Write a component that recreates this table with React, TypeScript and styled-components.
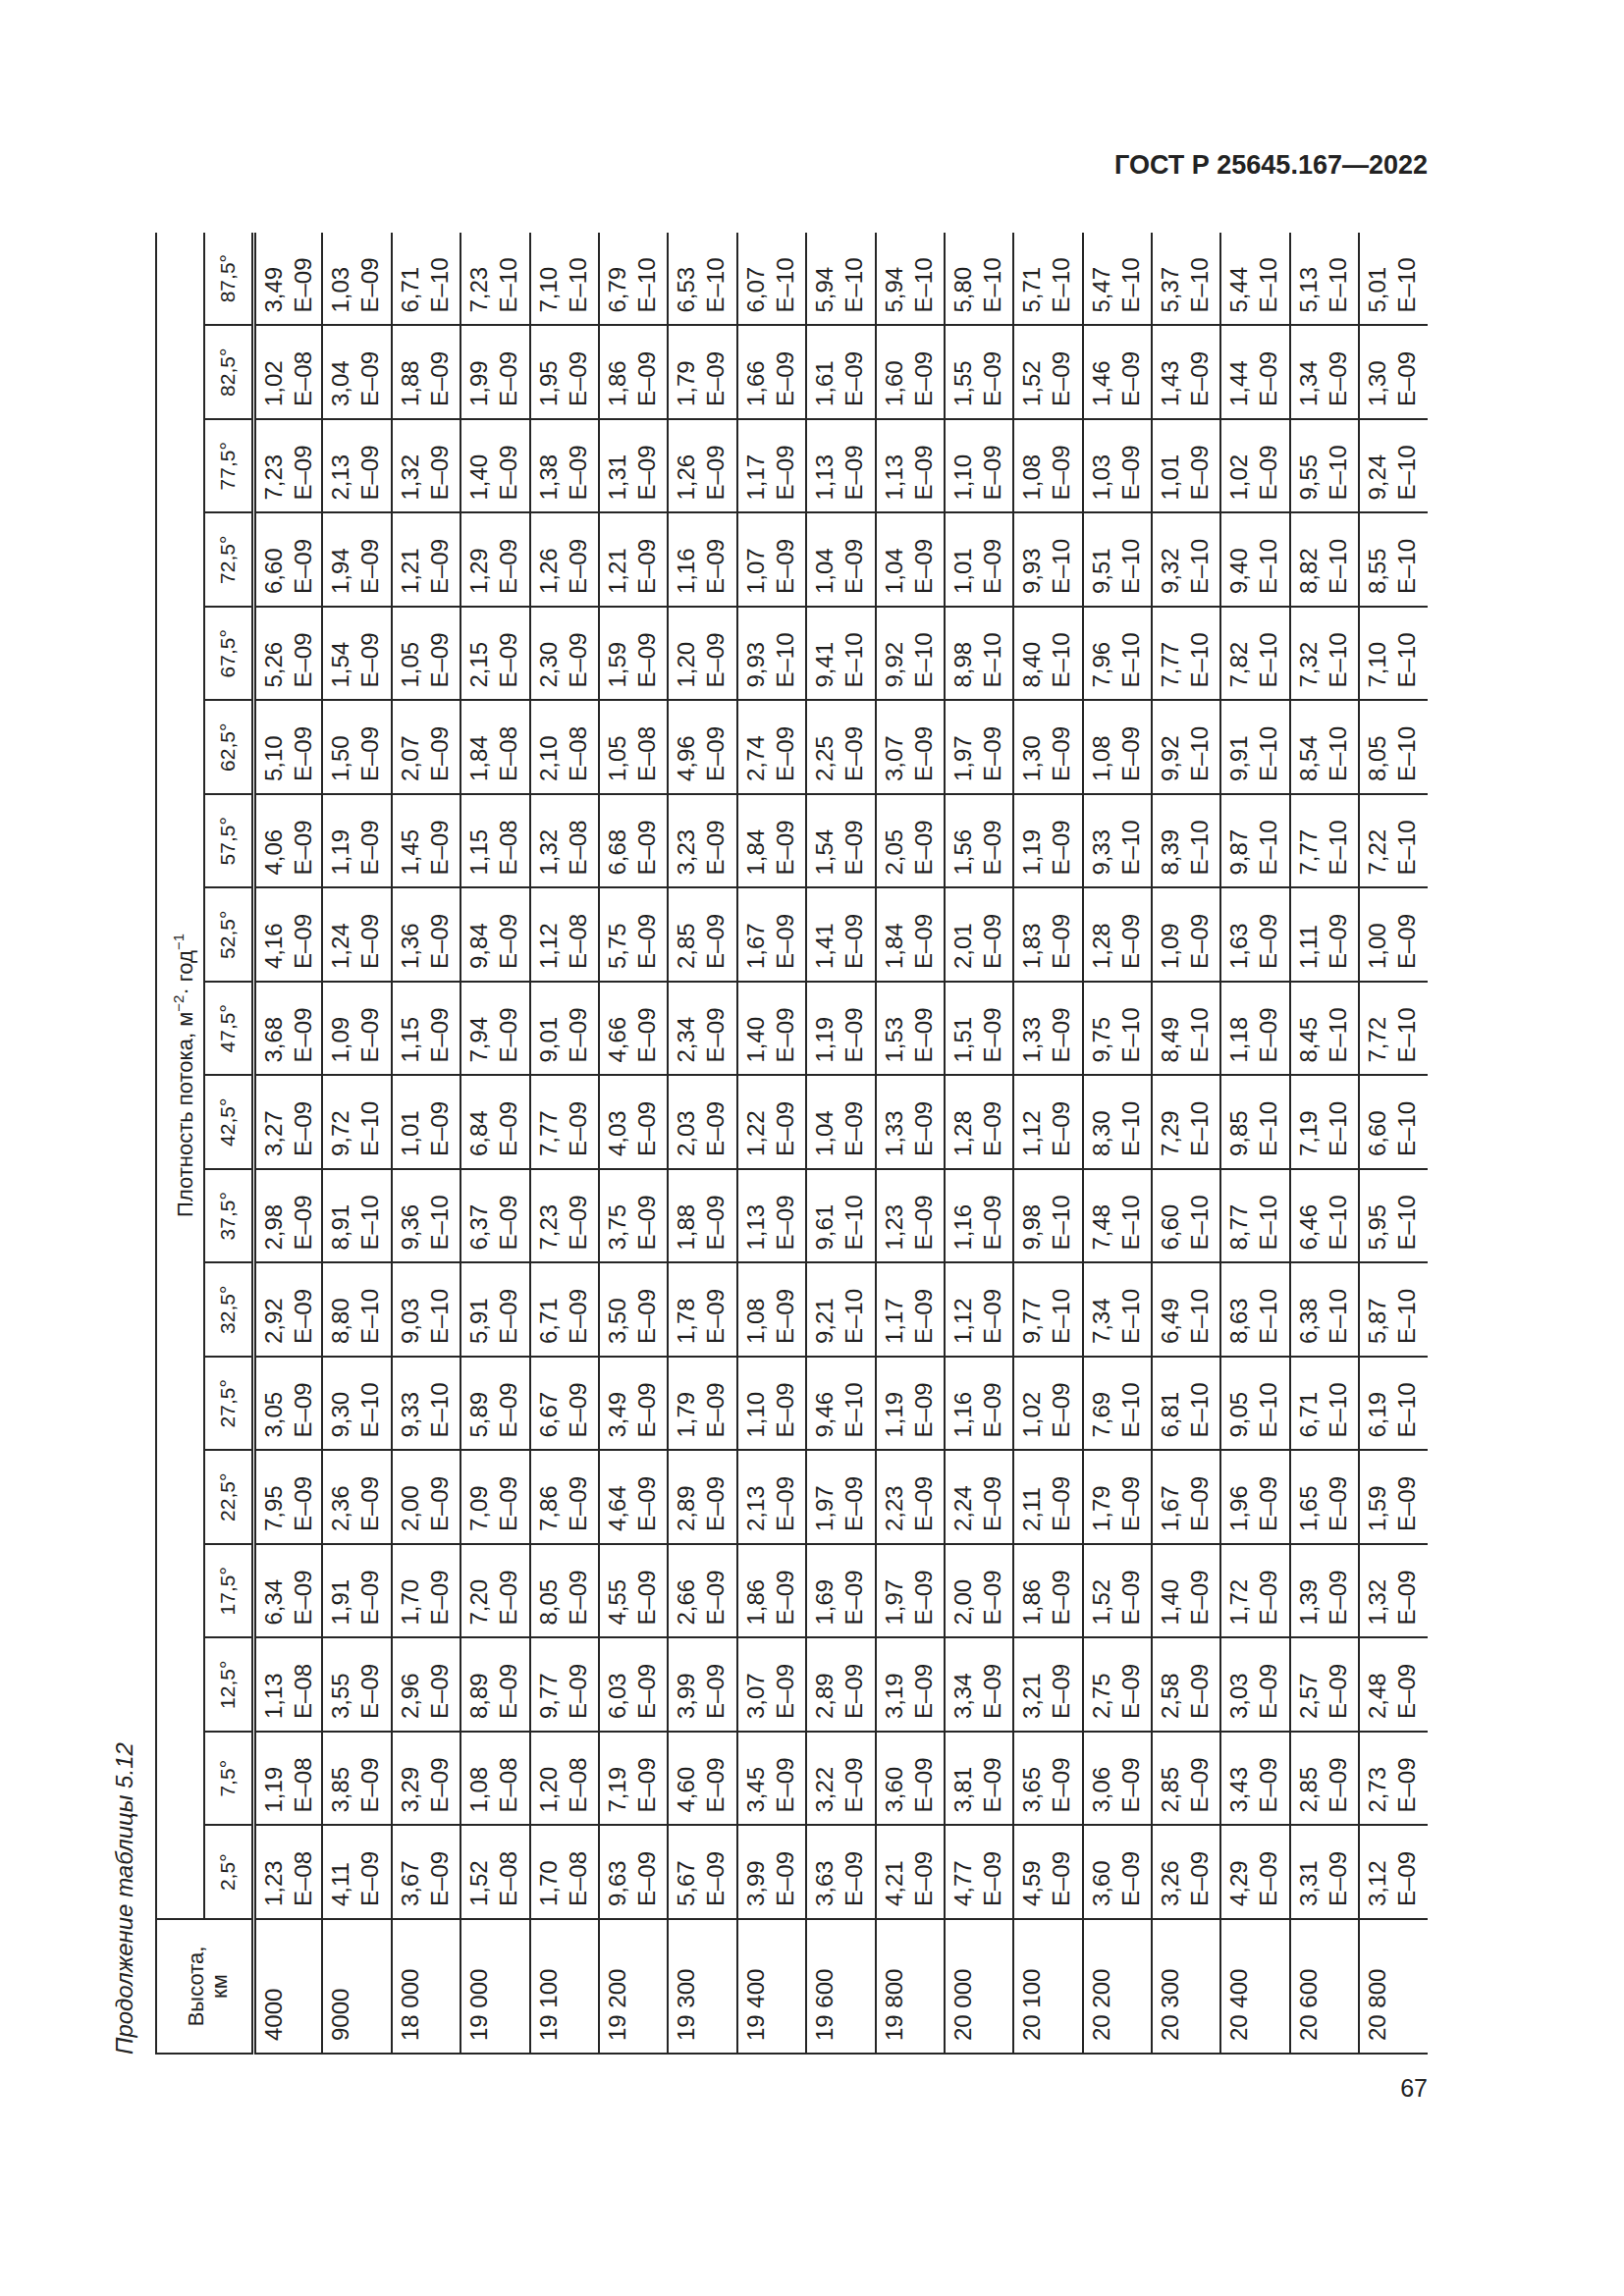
import styled, { createGlobalStyle } from 'styled-components';

const GlobalStyle = createGlobalStyle`
  html, body {
    margin: 0;
    padding: 0;
    background: #ffffff;
    overflow: hidden;
  }
  body {
    font-family: "Liberation Sans", Arial, sans-serif;
    color: #1f1f1f;
  }
`;

const Page = styled.div`
  display: flex;
  flex-direction: column;
  width: 1341px;
  margin-left: 113px;
  padding-top: 152px;
`;

const DocCode = styled.div`
  align-self: flex-end;
  font-size: 27px;
  line-height: 32px;
  font-weight: 700;
  color: #222;
`;

const Sheet = styled.div`
  width: 1341px;
  height: 1856px;
  margin-top: 53px;
  overflow: hidden;
`;

// the table is printed sideways: lay it out upright, then turn it
const Turned = styled.div`
  width: 1856px;
  height: 1341px;
  transform-origin: 0 0;
  transform: translateY(1856px) rotate(-90deg);
`;

const Caption = styled.div`
  font-size: 24px;
  line-height: 28px;
  font-style: italic;
  margin-bottom: 17px;
  color: #222;
`;

const Grid = styled.table`
  width: 1856px;
  table-layout: fixed;
  border-collapse: collapse;
  font-size: 24px;
  color: #1f1f1f;

  td, th {
    border: 2px solid #262626;
    font-weight: 400;
  }
`;

const HeadRow = styled.tr<{ $h: number }>`
  height: ${(p) => p.$h}px;
`;

const HeightHead = styled.th`
  font-size: 22px;
  line-height: 24px;
  text-align: center;
  vertical-align: middle;
  padding: 8px 0 0;
  border-bottom: 5px double #262626 !important;
`;

const FluxHead = styled.th`
  font-size: 22px;
  line-height: 26px;
  text-align: center;
  vertical-align: bottom;
  padding: 0 0 5px;

  sup {
    font-size: 15px;
    line-height: 0;
    vertical-align: 9px;
  }
`;

const AngleCell = styled.th`
  font-size: 21px;
  line-height: 26px;
  text-align: center;
  vertical-align: middle;
  padding: 0;
  border-bottom: 5px double #262626 !important;
`;

const DataRow = styled.tr`
  height: 70.4px;
`;

const HeightCell = styled.td`
  vertical-align: top;
  text-align: left;
  line-height: 30px;
  padding: 3px 12px 0;
  white-space: nowrap;
`;

const ValueCell = styled.td`
  vertical-align: top;
  text-align: left;
  line-height: 30px;
  padding: 3px 12px 0;
  white-space: nowrap;
`;

const PageNo = styled.div`
  align-self: flex-end;
  font-size: 25px;
  line-height: 30px;
  margin-top: 19px;
  color: #222;
`;

const angles = [
  '2,5', '7,5', '12,5', '17,5', '22,5', '27,5', '32,5', '37,5', '42,5',
  '47,5', '52,5', '57,5', '62,5', '67,5', '72,5', '77,5', '82,5', '87,5',
];

const rows: { h: string; v: string }[] = [
  { h: '4000', v: '1,23-08 1,19-08 1,13-08 6,34-09 7,95-09 3,05-09 2,92-09 2,98-09 3,27-09 3,68-09 4,16-09 4,06-09 5,10-09 5,26-09 6,60-09 7,23-09 1,02-08 3,49-09' },
  { h: '9000', v: '4,11-09 3,85-09 3,55-09 1,91-09 2,36-09 9,30-10 8,80-10 8,91-10 9,72-10 1,09-09 1,24-09 1,19-09 1,50-09 1,54-09 1,94-09 2,13-09 3,04-09 1,03-09' },
  { h: '18 000', v: '3,67-09 3,29-09 2,96-09 1,70-09 2,00-09 9,33-10 9,03-10 9,36-10 1,01-09 1,15-09 1,36-09 1,45-09 2,07-09 1,05-09 1,21-09 1,32-09 1,88-09 6,71-10' },
  { h: '19 000', v: '1,52-08 1,08-08 8,89-09 7,20-09 7,09-09 5,89-09 5,91-09 6,37-09 6,84-09 7,94-09 9,84-09 1,15-08 1,84-08 2,15-09 1,29-09 1,40-09 1,99-09 7,23-10' },
  { h: '19 100', v: '1,70-08 1,20-08 9,77-09 8,05-09 7,86-09 6,67-09 6,71-09 7,23-09 7,77-09 9,01-09 1,12-08 1,32-08 2,10-08 2,30-09 1,26-09 1,38-09 1,95-09 7,10-10' },
  { h: '19 200', v: '9,63-09 7,19-09 6,03-09 4,55-09 4,64-09 3,49-09 3,50-09 3,75-09 4,03-09 4,66-09 5,75-09 6,68-09 1,05-08 1,59-09 1,21-09 1,31-09 1,86-09 6,79-10' },
  { h: '19 300', v: '5,67-09 4,60-09 3,99-09 2,66-09 2,89-09 1,79-09 1,78-09 1,88-09 2,03-09 2,34-09 2,85-09 3,23-09 4,96-09 1,20-09 1,16-09 1,26-09 1,79-09 6,53-10' },
  { h: '19 400', v: '3,99-09 3,45-09 3,07-09 1,86-09 2,13-09 1,10-09 1,08-09 1,13-09 1,22-09 1,40-09 1,67-09 1,84-09 2,74-09 9,93-10 1,07-09 1,17-09 1,66-09 6,07-10' },
  { h: '19 600', v: '3,63-09 3,22-09 2,89-09 1,69-09 1,97-09 9,46-10 9,21-10 9,61-10 1,04-09 1,19-09 1,41-09 1,54-09 2,25-09 9,41-10 1,04-09 1,13-09 1,61-09 5,94-10' },
  { h: '19 800', v: '4,21-09 3,60-09 3,19-09 1,97-09 2,23-09 1,19-09 1,17-09 1,23-09 1,33-09 1,53-09 1,84-09 2,05-09 3,07-09 9,92-10 1,04-09 1,13-09 1,60-09 5,94-10' },
  { h: '20 000', v: '4,77-09 3,81-09 3,34-09 2,00-09 2,24-09 1,16-09 1,12-09 1,16-09 1,28-09 1,51-09 2,01-09 1,56-09 1,97-09 8,98-10 1,01-09 1,10-09 1,55-09 5,80-10' },
  { h: '20 100', v: '4,59-09 3,65-09 3,21-09 1,86-09 2,11-09 1,02-09 9,77-10 9,98-10 1,12-09 1,33-09 1,83-09 1,19-09 1,30-09 8,40-10 9,93-10 1,08-09 1,52-09 5,71-10' },
  { h: '20 200', v: '3,60-09 3,06-09 2,75-09 1,52-09 1,79-09 7,69-10 7,34-10 7,48-10 8,30-10 9,75-10 1,28-09 9,33-10 1,08-09 7,96-10 9,51-10 1,03-09 1,46-09 5,47-10' },
  { h: '20 300', v: '3,26-09 2,85-09 2,58-09 1,40-09 1,67-09 6,81-10 6,49-10 6,60-10 7,29-10 8,49-10 1,09-09 8,39-10 9,92-10 7,77-10 9,32-10 1,01-09 1,43-09 5,37-10' },
  { h: '20 400', v: '4,29-09 3,43-09 3,03-09 1,72-09 1,96-09 9,05-10 8,63-10 8,77-10 9,85-10 1,18-09 1,63-09 9,87-10 9,91-10 7,82-10 9,40-10 1,02-09 1,44-09 5,44-10' },
  { h: '20 600', v: '3,31-09 2,85-09 2,57-09 1,39-09 1,65-09 6,71-10 6,38-10 6,46-10 7,19-10 8,45-10 1,11-09 7,77-10 8,54-10 7,32-10 8,82-10 9,55-10 1,34-09 5,13-10' },
  { h: '20 800', v: '3,12-09 2,73-09 2,48-09 1,32-09 1,59-09 6,19-10 5,87-10 5,95-10 6,60-10 7,72-10 1,00-09 7,22-10 8,05-10 7,10-10 8,55-10 9,24-10 1,30-09 5,01-10' },
];

const Value = ({ raw }: { raw: string }) => {
  const [mant, exp] = raw.split('-');
  return (
    <ValueCell>
      {mant}
      <br />
      {`E–${exp}`}
    </ValueCell>
  );
};

function App() {
  return (
    <>
      <GlobalStyle />
      <Page>
        <DocCode>ГОСТ Р 25645.167—2022</DocCode>
        <Sheet>
          <Turned>
            <Caption>Продолжение таблицы 5.12</Caption>
            <Grid>
              <colgroup>
                <col style={{ width: 137 }} />
                {angles.map((a) => (
                  <col key={a} style={{ width: 95.5 }} />
                ))}
              </colgroup>
              <thead>
                <HeadRow $h={49}>
                  <HeightHead rowSpan={2}>
                    Высота,
                    <br />
                    км
                  </HeightHead>
                  <FluxHead colSpan={18}>
                    Плотность потока, м<sup>−2</sup>· год<sup>−1</sup>
                  </FluxHead>
                </HeadRow>
                <HeadRow $h={50}>
                  {angles.map((a) => (
                    <AngleCell key={a}>{a}°</AngleCell>
                  ))}
                </HeadRow>
              </thead>
              <tbody>
                {rows.map((r) => (
                  <DataRow key={r.h}>
                    <HeightCell>{r.h.replace(' ', '\u00a0')}</HeightCell>
                    {r.v.split(' ').map((raw, i) => (
                      <Value key={i} raw={raw} />
                    ))}
                  </DataRow>
                ))}
              </tbody>
            </Grid>
          </Turned>
        </Sheet>
        <PageNo>67</PageNo>
      </Page>
    </>
  );
}

export default App;
